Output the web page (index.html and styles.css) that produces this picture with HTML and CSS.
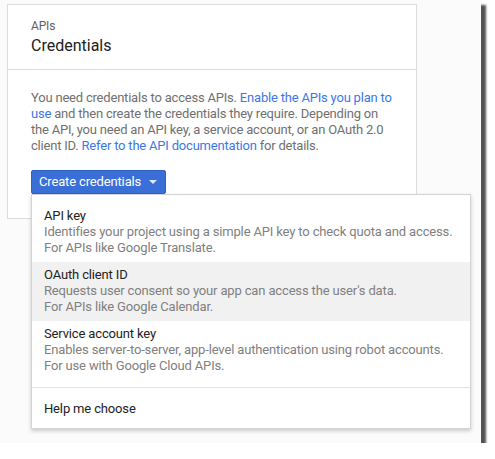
FILE: index.html
```html
<!DOCTYPE html>
<html>
<head>
<meta charset="utf-8">
<link rel="stylesheet" href="styles.css">
</head>
<body>
<div class="paper">
  <div class="card">
    <div class="card-head">
      <div class="crumb">APIs</div>
      <div class="title">Credentials</div>
    </div>
    <div class="card-body">
      <p class="intro">You need credentials to access APIs. <a href="#">Enable the APIs you plan to use</a> and then create the credentials they require. Depending on the API, you need an API key, a service account, or an OAuth 2.0 client ID. <a href="#">Refer to the API documentation</a> for details.</p>
      <div class="dropdown">
        <button class="btn">Create credentials <span class="caret"></span></button>
        <div class="menu">
          <div class="item">
            <div class="item-title">API key</div>
            <div class="item-desc">Identifies your project using a simple API key to check quota and access.<br>For APIs like Google Translate.</div>
          </div>
          <div class="item active">
            <div class="item-title">OAuth client ID</div>
            <div class="item-desc">Requests user consent so your app can access the user's data.<br>For APIs like Google Calendar.</div>
          </div>
          <div class="item">
            <div class="item-title">Service account key</div>
            <div class="item-desc">Enables server-to-server, app-level authentication using robot accounts.<br>For use with Google Cloud APIs.</div>
          </div>
          <div class="sep"></div>
          <div class="item help">
            <div class="item-title">Help me choose</div>
          </div>
        </div>
      </div>
    </div>
  </div>
</div>
</body>
</html>
```

FILE: styles.css
```css
html, body {
  margin: 0;
  padding: 0;
  background: #fff;
}
body {
  font-family: Roboto, "Liberation Sans", Arial, sans-serif;
  font-size: 13px;
  line-height: 16px;
  letter-spacing: -0.15px;
}
.paper {
  width: 481px;
  height: 443px;
  box-sizing: border-box;
  padding: 4px 0 0 7px;
  background: #fbfbfb;
  box-shadow: 5px 5px 2px rgba(40, 40, 40, 0.8);
}
.card {
  width: 410px;
  box-sizing: border-box;
  background: #fff;
  border: 1px solid #dcdcdc;
}
.card-head {
  padding: 13px 23px 12px;
  border-bottom: 1px solid #dcdcdc;
}
.crumb {
  color: #5f5f5f;
  font-size: 12px;
  line-height: 16px;
}
.title {
  color: #212121;
  font-size: 16px;
  line-height: 23px;
  letter-spacing: 0;
}
.card-body {
  padding: 20px 22px 24px 23px;
}
.intro {
  margin: 0;
  color: #707070;
  letter-spacing: -0.2px;
}
.intro a {
  color: #3b78e7;
  text-decoration: none;
}
.dropdown {
  position: relative;
  margin-top: 16px;
}
.btn {
  display: flex;
  align-items: center;
  height: 24px;
  padding: 0 8px 0 7px;
  gap: 8px;
  background: #3a6fd8;
  border: 1px solid #2f5fc4;
  border-radius: 2px;
  color: #fff;
  font-family: inherit;
  font-size: 13px;
  line-height: 16px;
  letter-spacing: -0.15px;
}
.caret {
  width: 0;
  height: 0;
  border-left: 4px solid transparent;
  border-right: 4px solid transparent;
  border-top: 4px solid #dfe8fa;
}
.menu {
  position: absolute;
  left: 0;
  top: 24px;
  width: 440px;
  box-sizing: border-box;
  background: #fff;
  border: 1px solid #d4d4d4;
  padding: 8px 0 5px;
  box-shadow: 0 2px 4px rgba(0, 0, 0, 0.2);
}
.item {
  padding: 5px 12px 6px;
}
.item.active {
  background: #f1f1f1;
}
.item-title {
  color: #222;
}
.item-desc {
  color: #808080;
}
.sep {
  height: 1px;
  background: #e2e2e2;
  margin: 7px 0 8px;
}
```
